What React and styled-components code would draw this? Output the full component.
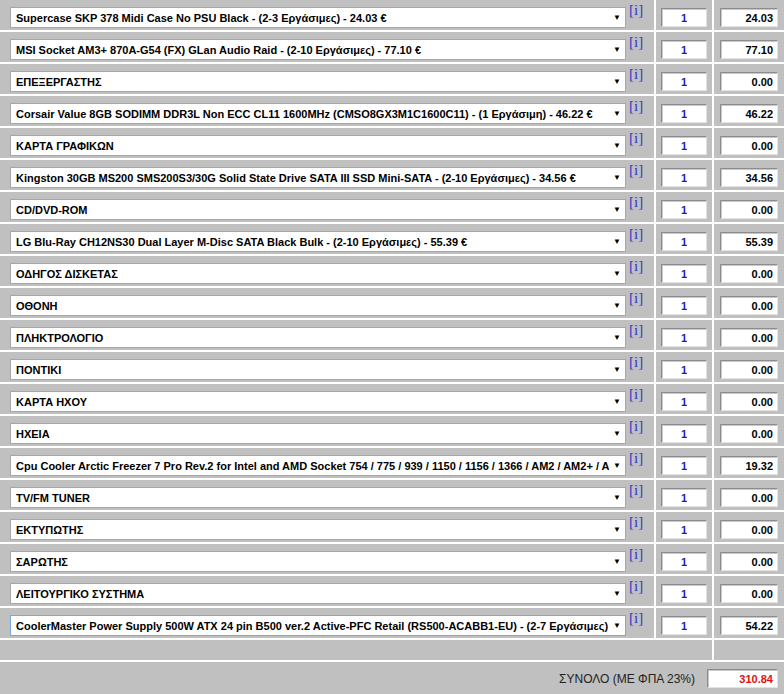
import React from 'react';
import styled, { createGlobalStyle } from 'styled-components';

const GlobalStyle = createGlobalStyle`
  body {
    margin: 0;
    background: #fff;
    font-family: "Liberation Sans", Arial, sans-serif;
  }
`;

const Table = styled.div`
  display: grid;
  grid-template-columns: 654px 56px 70px;
  grid-template-rows: repeat(20, 30px) 20px 32px;
  gap: 2px;
  width: 784px;
  background: #fff;
`;

const Cell = styled.div`
  background: #c0c0c0;
  display: flex;
  align-items: flex-start;
  justify-content: ${p => p.$justify || 'flex-start'};
  grid-column: ${p => p.$span || 'auto'};
  padding: ${p => p.$pad || '0'};
  box-sizing: border-box;
`;

const SelectBox = styled.label`
  display: flex;
  align-items: center;
  width: 616px;
  height: 21px;
  margin: 7px 0 0 10px;
  box-sizing: border-box;
  background: #fff;
  border: 1px solid ${p => (p.$focus ? '#7ba7e1' : '#a6a6a6')};
`;

const Select = styled.select`
  appearance: none;
  flex: 1;
  min-width: 0;
  border: none;
  outline: none;
  background: transparent;
  padding: 0 0 0 5px;
  height: 19px;
  font-family: "Liberation Sans", Arial, sans-serif;
  font-size: 11px;
  font-weight: bold;
  color: #000;
`;

const Arrow = styled.span`
  width: 16px;
  font-size: 8px;
  color: #000;
  text-align: center;
`;

const Info = styled.a`
  margin: 2px 0 0 3px;
  color: #3333cc;
  font-family: "Liberation Serif", "Times New Roman", serif;
  font-size: 15px;
  text-decoration: none;
`;

const Field = styled.input`
  box-sizing: border-box;
  width: ${p => p.$w}px;
  height: 19px;
  margin-top: ${p => p.$top || 8}px;
  border: 1px solid;
  border-color: #8c8c8c #e2e2e2 #e2e2e2 #8c8c8c;
  box-shadow: inset 1px 1px 0 #c8c8c8;
  background: #fff;
  padding: 0 4px;
  font-family: "Liberation Sans", Arial, sans-serif;
  font-size: 11px;
  font-weight: bold;
  text-align: ${p => p.$align || 'right'};
  color: ${p => p.$color || '#000'};
`;

const TotalLabel = styled.span`
  font-size: 12px;
  color: #222;
  margin: 10px 12px 0 0;
`;

const items = [
  ['Supercase SKP 378 Midi Case No PSU Black - (2-3 Εργάσιμες) - 24.03 €', '24.03'],
  ['MSI Socket AM3+ 870A-G54 (FX) GLan Audio Raid - (2-10 Εργάσιμες) - 77.10 €', '77.10'],
  ['ΕΠΕΞΕΡΓΑΣΤΗΣ', '0.00'],
  ['Corsair Value 8GB SODIMM DDR3L Non ECC CL11 1600MHz (CMSO8GX3M1C1600C11) - (1 Εργάσιμη) - 46.22 €', '46.22'],
  ['ΚΑΡΤΑ ΓΡΑΦΙΚΩΝ', '0.00'],
  ['Kingston 30GB MS200 SMS200S3/30G Solid State Drive SATA III SSD Mini-SATA - (2-10 Εργάσιμες) - 34.56 €', '34.56'],
  ['CD/DVD-ROM', '0.00'],
  ['LG Blu-Ray CH12NS30 Dual Layer M-Disc SATA Black Bulk - (2-10 Εργάσιμες) - 55.39 €', '55.39'],
  ['ΟΔΗΓΟΣ ΔΙΣΚΕΤΑΣ', '0.00'],
  ['ΟΘΟΝΗ', '0.00'],
  ['ΠΛΗΚΤΡΟΛΟΓΙΟ', '0.00'],
  ['ΠΟΝΤΙΚΙ', '0.00'],
  ['ΚΑΡΤΑ ΗΧΟΥ', '0.00'],
  ['ΗΧΕΙΑ', '0.00'],
  ['Cpu Cooler Arctic Freezer 7 Pro Rev.2 for Intel and AMD Socket 754 / 775 / 939 / 1150 / 1156 / 1366 / AM2 / AM2+ / AM3 - (2-10 Εργάσιμες) - 19.32 €', '19.32'],
  ['TV/FM TUNER', '0.00'],
  ['ΕΚΤΥΠΩΤΗΣ', '0.00'],
  ['ΣΑΡΩΤΗΣ', '0.00'],
  ['ΛΕΙΤΟΥΡΓΙΚΟ ΣΥΣΤΗΜΑ', '0.00'],
  ['CoolerMaster Power Supply 500W ATX 24 pin B500 ver.2 Active-PFC Retail (RS500-ACABB1-EU) - (2-7 Εργάσιμες) - 54.22 €', '54.22'],
];

export default function App() {
  return (
    <>
      <GlobalStyle />
      <Table>
        {items.map(([name, price], i) => (
          <React.Fragment key={i}>
            <Cell>
              <SelectBox $focus={i === items.length - 1}>
                <Select defaultValue={name}>
                  <option>{name}</option>
                </Select>
                <Arrow>▼</Arrow>
              </SelectBox>
              <Info href="#">[i]</Info>
            </Cell>
            <Cell $justify="center">
              <Field $w={46} $align="center" $color="#1a1acc" defaultValue="1" />
            </Cell>
            <Cell $justify="center">
              <Field $w={58} defaultValue={price} />
            </Cell>
          </React.Fragment>
        ))}
        <Cell $span="1 / 3" />
        <Cell />
        <Cell $span="1 / 4" $justify="flex-end" $pad="0 6px 0 0">
          <TotalLabel>ΣΥΝΟΛΟ (ΜΕ ΦΠΑ 23%)</TotalLabel>
          <Field $w={71} $top={7} $color="#e01010" defaultValue="310.84" />
        </Cell>
      </Table>
    </>
  );
}
